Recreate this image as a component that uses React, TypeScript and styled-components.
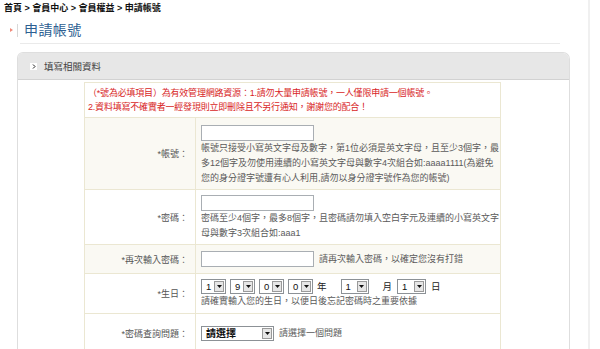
import React from "react";
import styled, { createGlobalStyle } from "styled-components";

const GlobalStyle = createGlobalStyle`
  html, body { margin: 0; padding: 0; background: #fff; }
  body { font-family: "Liberation Sans", "Noto Sans CJK TC", sans-serif; }
  * { box-sizing: border-box; }
`;

const Page = styled.div`
  width: 590px;
  height: 349px;
  overflow: hidden;
  border-right: 2px solid #f0f0f0;
`;

const Breadcrumb = styled.div`
  padding: 2px 0 0 4px;
  height: 15px;
  font-size: 9px;
  line-height: 12px;
  font-weight: bold;
  color: #111;
`;

const TitleRow = styled.div`
  display: flex;
  align-items: center;
  height: 26px;
  padding-left: 10px;
  margin-top: 1px;
`;

const Marker = styled.span`
  width: 0;
  height: 0;
  border-top: 2px solid transparent;
  border-bottom: 2px solid transparent;
  border-left: 3px solid #f08a7a;
  margin-top: 2px;
`;

const TitleBar = styled.span`
  width: 1px;
  height: 13px;
  background: #d8d8d8;
  margin: 2px 6px 0 4px;
`;

const Title = styled.h1`
  margin: 0;
  font-family: "Noto Sans CJK TC", sans-serif;
  font-size: 14px;
  font-weight: normal;
  letter-spacing: 0.4px;
  color: #2d5f92;
  line-height: 18px;
`;

const Divider = styled.div`
  margin: 1px 0 0 20px;
  width: 540px;
  height: 1px;
  background: #eaeaea;
`;

const Panel = styled.section`
  margin: 8px 0 0 17px;
  width: 553px;
  height: 400px;
  border: 1px solid #dedede;
  border-bottom: none;
  border-radius: 6px 7px 0 0;
  overflow: hidden;
`;

const PanelHeader = styled.div`
  display: flex;
  align-items: center;
  height: 27px;
  padding-left: 12px;
  background: #e7e7e7;
  border-bottom: 1px solid #d2d2d2;
  font-size: 9.5px;
  color: #444;
`;

const HeaderIcon = styled.span`
  display: inline-flex;
  align-items: center;
  justify-content: center;
  width: 7px;
  height: 7px;
  background: #fff;
  margin-right: 7px;
`;

const PanelBody = styled.div`
  padding-top: 2px;
`;

const FormTable = styled.table`
  margin: 0 0 0 66px;
  width: 417px;
  border-collapse: collapse;
  font-size: 9px;
  color: #555;
`;

const Row = styled.tr<{ $shade?: boolean }>`
  background: ${(p) => (p.$shade ? "#faf9f3" : "#fff")};
`;

const Cell = styled.td`
  border: 1px solid #ebe7d2;
  vertical-align: middle;
`;

const NoticeCell = styled(Cell)`
  padding: 3px 3px 3px;
  color: #d81e26;
  line-height: 14px;
  background: #fff;
  letter-spacing: -0.2px;
`;

const LabelCell = styled(Cell)`
  width: 111px;
  text-align: right;
  padding-right: 7px;
  white-space: nowrap;
`;

const ValueCell = styled(Cell)<{ $pad?: string }>`
  padding: ${(p) => p.$pad || "4px 1px 4px 5px"};
  line-height: 15px;
`;

const Input = styled.input`
  display: block;
  width: 113px;
  height: 16px;
  margin: 0;
  padding: 0 2px;
  border: 1px solid #a9aeb3;
  background: #fff;
  font-size: 9px;
`;

const Inline = styled.div`
  display: flex;
  align-items: center;
`;

const Help = styled.div`
  color: #5a5a5a;
`;

const SideNote = styled.span`
  margin-left: 5px;
  color: #5a5a5a;
`;

const Select = styled.span<{ $w: number; $bold?: boolean; $mr?: number }>`
  display: inline-flex;
  align-items: center;
  justify-content: space-between;
  width: ${(p) => p.$w}px;
  height: 15px;
  border: 1px solid #8c9196;
  background: #fff;
  padding: 0 1px 0 4px;
  font-size: ${(p) => (p.$bold ? "10px" : "9.5px")};
  font-weight: ${(p) => (p.$bold ? "bold" : "normal")};
  color: #111;
  margin-right: ${(p) => p.$mr ?? 0}px;
`;

const SelectArrow = styled.span`
  display: inline-flex;
  align-items: center;
  justify-content: center;
  width: 10px;
  height: 11px;
  border: 1px solid #9a9a9a;
  background: #e6e6e6;
`;

const Unit = styled.span<{ $ml: number; $mr: number }>`
  font-size: 9.5px;
  color: #222;
  margin: 0 ${(p) => p.$mr}px 0 ${(p) => p.$ml}px;
`;

const Arrow = () => (
  <SelectArrow>
    <svg width="5" height="3" viewBox="0 0 5 3">
      <path d="M0 0H5L2.5 3Z" fill="#111" />
    </svg>
  </SelectArrow>
);

const Dropdown = ({ value, w, bold, mr }: { value: string; w: number; bold?: boolean; mr?: number }) => (
  <Select $w={w} $bold={bold} $mr={mr}>
    <span>{value}</span>
    <Arrow />
  </Select>
);

export default function App() {
  return (
    <>
      <GlobalStyle />
      <Page>
        <Breadcrumb>首頁 &gt; 會員中心 &gt; 會員權益 &gt; 申請帳號</Breadcrumb>
        <TitleRow>
          <Marker />
          <TitleBar />
          <Title>申請帳號</Title>
        </TitleRow>
        <Divider />
        <Panel>
          <PanelHeader>
            <HeaderIcon>
              <svg width="4" height="5" viewBox="0 0 4 5">
                <path d="M1 0.5L3 2.5L1 4.5" stroke="#222" strokeWidth="1" fill="none" />
              </svg>
            </HeaderIcon>
            填寫相關資料
          </PanelHeader>
          <PanelBody>
            <FormTable>
              <tbody>
                <tr>
                  <NoticeCell colSpan={2}>
                    （*號為必填項目）為有效管理網路資源：1.請勿大量申請帳號，一人僅限申請一個帳號。
                    <br />
                    2.資料填寫不確實者一經發現則立即刪除且不另行通知，謝謝您的配合！
                  </NoticeCell>
                </tr>
                <Row $shade>
                  <LabelCell>*帳號：</LabelCell>
                  <ValueCell $pad="7px 1px 3px 5px">
                    <Input />
                    <Help>
                      帳號只接受小寫英文字母及數字，第1位必須是英文字母，且至少3個字，最多12個字及勿使用連續的小寫英文字母與數字4次組合如:aaaa1111(為避免您的身分證字號遭有心人利用,請勿以身分證字號作為您的帳號)
                    </Help>
                  </ValueCell>
                </Row>
                <Row>
                  <LabelCell>*密碼：</LabelCell>
                  <ValueCell $pad="5px 1px 3px 5px">
                    <Input />
                    <Help>
                      密碼至少4個字，最多8個字，且密碼請勿填入空白字元及連續的小寫英文字母與數字3次組合如:aaa1
                    </Help>
                  </ValueCell>
                </Row>
                <Row $shade>
                  <LabelCell>*再次輸入密碼：</LabelCell>
                  <ValueCell $pad="6px 1px 6px 5px">
                    <Inline>
                      <Input />
                      <SideNote>請再次輸入密碼，以確定您沒有打錯</SideNote>
                    </Inline>
                  </ValueCell>
                </Row>
                <Row>
                  <LabelCell>*生日：</LabelCell>
                  <ValueCell $pad="5px 1px 4px 5px">
                    <Inline>
                      <Dropdown value="1" w={25} mr={4} />
                      <Dropdown value="9" w={25} mr={4} />
                      <Dropdown value="0" w={25} mr={4} />
                      <Dropdown value="0" w={25} />
                      <Unit $ml={4} $mr={14}>年</Unit>
                      <Dropdown value="1" w={28} />
                      <Unit $ml={14} $mr={5}>月</Unit>
                      <Dropdown value="1" w={29} />
                      <Unit $ml={5} $mr={0}>日</Unit>
                    </Inline>
                    <Help>請確實輸入您的生日，以便日後忘記密碼時之重要依據</Help>
                  </ValueCell>
                </Row>
                <Row>
                  <LabelCell>*密碼查詢問題：</LabelCell>
                  <ValueCell $pad="12px 1px 12px 5px">
                    <Inline>
                      <Dropdown value="請選擇" w={73} bold />
                      <SideNote>請選擇一個問題</SideNote>
                    </Inline>
                  </ValueCell>
                </Row>
              </tbody>
            </FormTable>
          </PanelBody>
        </Panel>
      </Page>
    </>
  );
}
